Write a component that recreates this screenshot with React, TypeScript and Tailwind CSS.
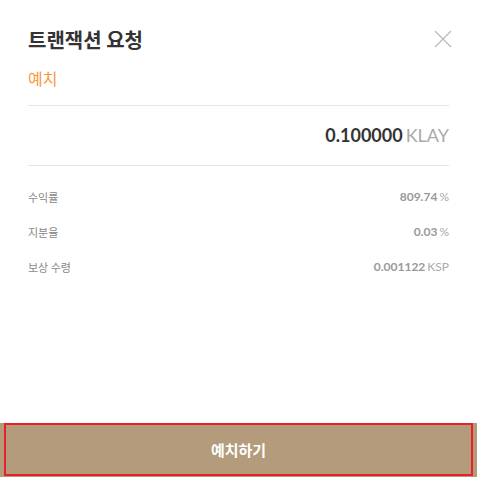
import React from 'react';

const KR = "font-['Noto_Sans_CJK_KR','Noto_Sans',sans-serif]";
const NUM = "font-['Lato','Noto_Sans_CJK_KR',sans-serif]";

const rows = [
  { label: '수익률', value: '809.74', unit: '%' },
  { label: '지분율', value: '0.03', unit: '%' },
  { label: '보상 수령', value: '0.001122', unit: 'KSP' },
];

const App: React.FC = () => {
  return (
    <div className={`flex h-[477px] w-full flex-col bg-white ${KR}`}>
      <div className="flex flex-1 flex-col px-[28px]">
        {/* header */}
        <div className="flex items-start justify-between pt-[26px]">
          <h2 className="text-[20px] leading-[28px] font-bold text-[#333]">트랜잭션 요청</h2>
          <button className="mt-[3px] mr-[-4px] h-[20px] w-[20px] text-[#bbb]" aria-label="close">
            <svg viewBox="0 0 20 20" className="h-[20px] w-[20px]" fill="none" stroke="currentColor" strokeWidth="1.3">
              <path d="M2 2 L18 18 M18 2 L2 18" />
            </svg>
          </button>
        </div>
        <div className="mt-[12px] text-[16px] leading-[24px] text-[#f7993b]">예치</div>
        <div className="mt-[15px] h-px bg-[#e4e4ea]" />

        {/* amount */}
        <div className={`flex h-[59px] items-center justify-end gap-[3px] ${NUM}`}>
          <span className="text-[18px] font-bold text-[#333]">0.100000</span>
          <span className="text-[18px] text-[#aaa]">KLAY</span>
        </div>
        <div className="h-px bg-[#e4e4ea]" />

        {/* details */}
        <div className="flex flex-col pt-[20px]">
          {rows.map((r) => (
            <div key={r.label} className="flex h-[35px] items-start justify-between">
              <span className="text-[11px] leading-[22px] text-[#888]">{r.label}</span>
              <span className={`flex items-baseline gap-[2px] leading-[22px] ${NUM}`}>
                <span className="text-[12px] font-bold text-[#999]">{r.value}</span>
                <span className="text-[12px] text-[#aaa]">{r.unit}</span>
              </span>
            </div>
          ))}
        </div>
      </div>

      {/* action */}
      <button className="relative h-[54px] w-full bg-[#b39b7b] text-[15px] font-bold text-white">
        예치하기
        <span className="pointer-events-none absolute inset-x-[4px] top-0 bottom-[1px] border-2 border-[#e8202a]" />
      </button>
    </div>
  );
};

export default App;
